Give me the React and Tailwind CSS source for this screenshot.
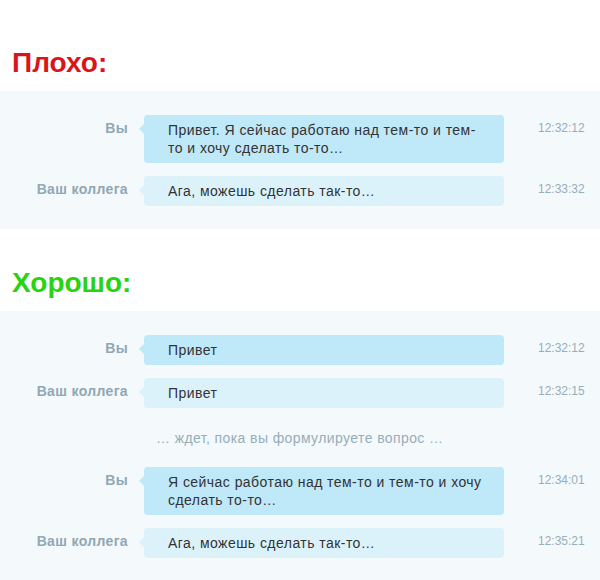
import React from "react";

const font = { fontFamily: '"Liberation Sans", Arial, Helvetica, sans-serif' };

function Msg({ name, text, time, me }) {
  return (
    <div className="flex items-start">
      <div className="w-[128px] shrink-0 text-right pt-[4px] text-[14px] leading-[18px] tracking-[0.35px] font-bold text-[#91a7b4]">
        {name}
      </div>
      <div
        className={`relative ml-[16px] w-[360px] shrink-0 rounded-[4px] pl-[24px] pr-[18px] py-[6px] text-[14px] leading-[18px] tracking-[0.45px] text-[#333333] ${
          me ? "bg-[#bfe8f9]" : "bg-[#dcf2fb]"
        }`}
      >
        <span
          className={`absolute left-[-5px] top-[9px] h-0 w-0 border-y-[5px] border-r-[5px] border-y-transparent ${
            me ? "border-r-[#bfe8f9]" : "border-r-[#dcf2fb]"
          }`}
        />
        {text}
      </div>
      <div className="ml-[34px] pt-[4px] text-[12px] leading-[18px] text-[#97adba]">{time}</div>
    </div>
  );
}

export default function App() {
  return (
    <div className="bg-white min-h-[580px]" style={font}>
      <h2 className="pt-[47px] pl-[12px] text-[28px] leading-[32px] font-bold text-[#da1519]">Плохо:</h2>
      <div className="mt-[12px] bg-[#f4f9fc] pt-[24px] pb-[23px] flex flex-col gap-[13px]">
        <Msg
          me
          name="Вы"
          text="Привет. Я сейчас работаю над тем-то и тем-то и хочу сделать то-то…"
          time="12:32:12"
        />
        <Msg name="Ваш коллега" text="Ага, можешь сделать так-то…" time="12:33:32" />
      </div>
      <h2 className="pt-[38px] pl-[12px] text-[28px] leading-[32px] font-bold text-[#27d314]">Хорошо:</h2>
      <div className="mt-[12px] bg-[#f4f9fc] pt-[24px] pb-[24px] flex flex-col gap-[13px]">
        <Msg me name="Вы" text="Привет" time="12:32:12" />
        <Msg name="Ваш коллега" text="Привет" time="12:32:15" />
        <div className="h-[33px] flex items-center pl-[156px] text-[14px] leading-[18px] tracking-[0.4px] text-[#97adba]">
          … ждет, пока вы формулируете вопрос …
        </div>
        <Msg
          me
          name="Вы"
          text="Я сейчас работаю над тем-то и тем-то и хочу сделать то-то…"
          time="12:34:01"
        />
        <Msg name="Ваш коллега" text="Ага, можешь сделать так-то…" time="12:35:21" />
      </div>
    </div>
  );
}
